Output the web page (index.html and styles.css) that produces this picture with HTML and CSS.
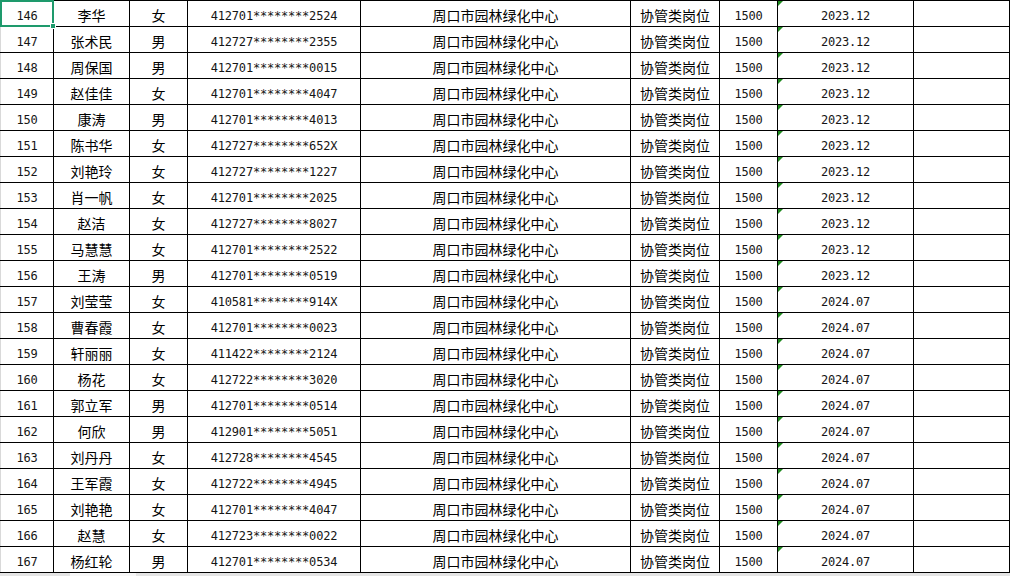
FILE: index.html
```html
<!DOCTYPE html>
<html lang="zh-CN">
<head>
<meta charset="utf-8">
<title>名单</title>
<link rel="stylesheet" href="styles.css">
</head>
<body>
<div class="sheet">
<table class="grid">
<colgroup>
<col class="w-no"><col class="w-name"><col class="w-sex"><col class="w-id"><col class="w-org"><col class="w-post"><col class="w-pay"><col class="w-date"><col class="w-note">
</colgroup>
<tbody>
<tr><td class="num sel">146</td><td class="zh">李华</td><td class="zh">女</td><td class="num">412701********2524</td><td class="zh">周口市园林绿化中心</td><td class="zh">协管类岗位</td><td class="num">1500</td><td class="num flag">2023.12</td><td></td></tr>
<tr><td class="num">147</td><td class="zh">张术民</td><td class="zh">男</td><td class="num">412727********2355</td><td class="zh">周口市园林绿化中心</td><td class="zh">协管类岗位</td><td class="num">1500</td><td class="num flag">2023.12</td><td></td></tr>
<tr><td class="num">148</td><td class="zh">周保国</td><td class="zh">男</td><td class="num">412701********0015</td><td class="zh">周口市园林绿化中心</td><td class="zh">协管类岗位</td><td class="num">1500</td><td class="num flag">2023.12</td><td></td></tr>
<tr><td class="num">149</td><td class="zh">赵佳佳</td><td class="zh">女</td><td class="num">412701********4047</td><td class="zh">周口市园林绿化中心</td><td class="zh">协管类岗位</td><td class="num">1500</td><td class="num flag">2023.12</td><td></td></tr>
<tr><td class="num">150</td><td class="zh">康涛</td><td class="zh">男</td><td class="num">412701********4013</td><td class="zh">周口市园林绿化中心</td><td class="zh">协管类岗位</td><td class="num">1500</td><td class="num flag">2023.12</td><td></td></tr>
<tr><td class="num">151</td><td class="zh">陈书华</td><td class="zh">女</td><td class="num">412727********652X</td><td class="zh">周口市园林绿化中心</td><td class="zh">协管类岗位</td><td class="num">1500</td><td class="num flag">2023.12</td><td></td></tr>
<tr><td class="num">152</td><td class="zh">刘艳玲</td><td class="zh">女</td><td class="num">412727********1227</td><td class="zh">周口市园林绿化中心</td><td class="zh">协管类岗位</td><td class="num">1500</td><td class="num flag">2023.12</td><td></td></tr>
<tr><td class="num">153</td><td class="zh">肖一帆</td><td class="zh">女</td><td class="num">412701********2025</td><td class="zh">周口市园林绿化中心</td><td class="zh">协管类岗位</td><td class="num">1500</td><td class="num flag">2023.12</td><td></td></tr>
<tr><td class="num">154</td><td class="zh">赵洁</td><td class="zh">女</td><td class="num">412727********8027</td><td class="zh">周口市园林绿化中心</td><td class="zh">协管类岗位</td><td class="num">1500</td><td class="num flag">2023.12</td><td></td></tr>
<tr><td class="num">155</td><td class="zh">马慧慧</td><td class="zh">女</td><td class="num">412701********2522</td><td class="zh">周口市园林绿化中心</td><td class="zh">协管类岗位</td><td class="num">1500</td><td class="num flag">2023.12</td><td></td></tr>
<tr><td class="num">156</td><td class="zh">王涛</td><td class="zh">男</td><td class="num">412701********0519</td><td class="zh">周口市园林绿化中心</td><td class="zh">协管类岗位</td><td class="num">1500</td><td class="num flag">2023.12</td><td></td></tr>
<tr><td class="num">157</td><td class="zh">刘莹莹</td><td class="zh">女</td><td class="num">410581********914X</td><td class="zh">周口市园林绿化中心</td><td class="zh">协管类岗位</td><td class="num">1500</td><td class="num flag">2024.07</td><td></td></tr>
<tr><td class="num">158</td><td class="zh">曹春霞</td><td class="zh">女</td><td class="num">412701********0023</td><td class="zh">周口市园林绿化中心</td><td class="zh">协管类岗位</td><td class="num">1500</td><td class="num flag">2024.07</td><td></td></tr>
<tr><td class="num">159</td><td class="zh">轩丽丽</td><td class="zh">女</td><td class="num">411422********2124</td><td class="zh">周口市园林绿化中心</td><td class="zh">协管类岗位</td><td class="num">1500</td><td class="num flag">2024.07</td><td></td></tr>
<tr><td class="num">160</td><td class="zh">杨花</td><td class="zh">女</td><td class="num">412722********3020</td><td class="zh">周口市园林绿化中心</td><td class="zh">协管类岗位</td><td class="num">1500</td><td class="num flag">2024.07</td><td></td></tr>
<tr><td class="num">161</td><td class="zh">郭立军</td><td class="zh">男</td><td class="num">412701********0514</td><td class="zh">周口市园林绿化中心</td><td class="zh">协管类岗位</td><td class="num">1500</td><td class="num flag">2024.07</td><td></td></tr>
<tr><td class="num">162</td><td class="zh">何欣</td><td class="zh">男</td><td class="num">412901********5051</td><td class="zh">周口市园林绿化中心</td><td class="zh">协管类岗位</td><td class="num">1500</td><td class="num flag">2024.07</td><td></td></tr>
<tr><td class="num">163</td><td class="zh">刘丹丹</td><td class="zh">女</td><td class="num">412728********4545</td><td class="zh">周口市园林绿化中心</td><td class="zh">协管类岗位</td><td class="num">1500</td><td class="num flag">2024.07</td><td></td></tr>
<tr><td class="num">164</td><td class="zh">王军霞</td><td class="zh">女</td><td class="num">412722********4945</td><td class="zh">周口市园林绿化中心</td><td class="zh">协管类岗位</td><td class="num">1500</td><td class="num flag">2024.07</td><td></td></tr>
<tr><td class="num">165</td><td class="zh">刘艳艳</td><td class="zh">女</td><td class="num">412701********4047</td><td class="zh">周口市园林绿化中心</td><td class="zh">协管类岗位</td><td class="num">1500</td><td class="num flag">2024.07</td><td></td></tr>
<tr><td class="num">166</td><td class="zh">赵慧</td><td class="zh">女</td><td class="num">412723********0022</td><td class="zh">周口市园林绿化中心</td><td class="zh">协管类岗位</td><td class="num">1500</td><td class="num flag">2024.07</td><td></td></tr>
<tr><td class="num">167</td><td class="zh">杨红轮</td><td class="zh">男</td><td class="num">412701********0534</td><td class="zh">周口市园林绿化中心</td><td class="zh">协管类岗位</td><td class="num">1500</td><td class="num flag">2024.07</td><td></td></tr>
</tbody>
</table>
<div class="hbar"><div class="hbar-thumb"></div></div>
</div>
</body>
</html>
```
FILE: styles.css
```css
html, body {
  margin: 0;
  padding: 0;
  background: #ffffff;
  overflow: hidden;
}

.sheet {
  width: 1010px;
  height: 576px;
  display: flex;
  flex-direction: column;
  background: #ffffff;
}

.grid {
  border-collapse: collapse;
  table-layout: fixed;
  width: 1009px;
  color: #000000;
}

.w-no { width: 53px; }
.w-name { width: 76px; }
.w-sex { width: 58px; }
.w-id { width: 173px; }
.w-org { width: 270px; }
.w-post { width: 89px; }
.w-pay { width: 58px; }
.w-date { width: 136px; }
.w-note { width: 96px; }

.grid td {
  border: 1px solid #000000;
  height: 22px;
  padding: 3px 0 0 0;
  line-height: 22px;
  text-align: center;
  vertical-align: top;
  white-space: nowrap;
  position: relative;
}

.grid tr td:first-child {
  border-left-color: #d9d9d9;
}

.grid td.zh {
  font-family: "Noto Sans CJK SC", "Noto Sans", sans-serif;
  font-size: 14px;
}

.grid td.num {
  font-family: "DejaVu Sans Mono", "Liberation Mono", monospace;
  font-size: 12px;
  letter-spacing: -0.2px;
  padding-top: 5px;
  height: 20px;
  line-height: 20px;
  color: #151515;
}

.grid td.flag::before {
  content: "";
  position: absolute;
  left: 0;
  top: 0;
  width: 0;
  height: 0;
  border-top: 5px solid #1f8a1f;
  border-right: 5px solid transparent;
}

.grid td.sel::after {
  content: "";
  position: absolute;
  left: -1px;
  top: -1px;
  width: 50px;
  height: 23px;
  border: 2px solid #1e9a6c;
  z-index: 2;
}

.grid td.sel::before {
  content: "";
  position: absolute;
  left: 49px;
  top: 22px;
  width: 6px;
  height: 6px;
  background: #1e9a6c;
  border: 1px solid #ffffff;
  box-sizing: border-box;
  z-index: 3;
}

.hbar {
  flex: 1;
  background: #e4e4e4;
  display: flex;
  padding-left: 70px;
}

.hbar-thumb {
  width: 66px;
  background: #f7f7f7;
}
```
